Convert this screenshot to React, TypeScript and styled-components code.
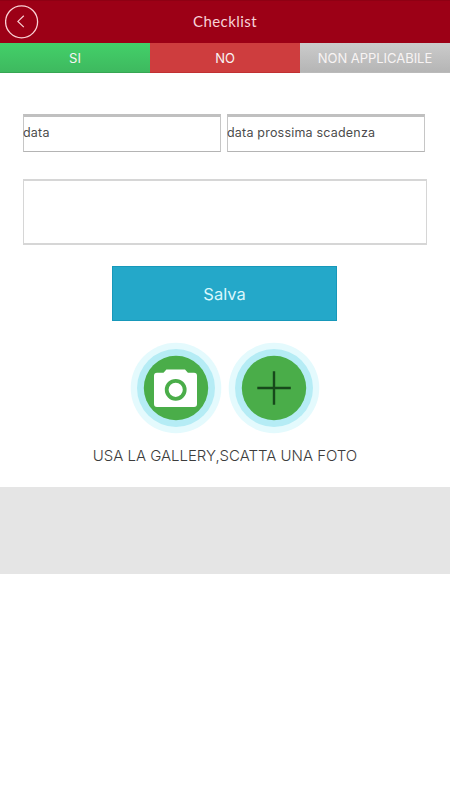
import React from "react";
import styled, { createGlobalStyle } from "styled-components";

const GlobalStyle = createGlobalStyle`
  * { box-sizing: border-box; }
  body { margin: 0; background: #fff; font-family: Inter, "Liberation Sans", sans-serif; }
`;

const Screen = styled.main`
  width: 450px;
  min-height: 800px;
  background: #fff;
`;

const Header = styled.header`
  display: grid;
  grid-template-columns: 44px 1fr 44px;
  align-items: center;
  height: 43px;
  background: #9c0016;
  box-shadow: inset 0 1px 0 #8e0013;
`;

const BackButton = styled.button`
  width: 34px;
  height: 34px;
  margin: 0 0 0 5px;
  padding: 0;
  border: 0;
  background: none;
  svg { display: block; }
`;

const Title = styled.h1`
  margin: 0 0 2px;
  text-align: center;
  font: 400 15px/20px Lato, sans-serif;
  letter-spacing: 0.42px;
  color: #f7d3d8;
`;

const Tabs = styled.nav`
  display: grid;
  grid-template-columns: repeat(3, 1fr);
  height: 30px;
`;

const Tab = styled.button<{ $fill: string; $edge: string; $spacing?: string }>`
  padding: 0;
  border: 0;
  border-bottom: 1px solid ${(p) => p.$edge};
  background: ${(p) => p.$fill};
  color: #f8f4f4;
  font: 400 13px/28px Inter, sans-serif;
  letter-spacing: ${(p) => p.$spacing ?? "0"};
`;

const Form = styled.form`
  display: flex;
  flex-direction: column;
  height: 414px;
  padding: 41px 23px 0;
`;

const DateRow = styled.div`
  display: flex;
  gap: 6px;
`;

const DateField = styled.div`
  width: 198px;
  height: 38px;
  border: 1px solid #c6c6c6;
  border-top: 3px solid #c0c0c0;
  border-bottom-color: #b4b4b4;
  color: #4c4c4c;
  font: 400 12.5px/32px Inter, sans-serif;
  letter-spacing: 0.2px;
  white-space: nowrap;
  span { margin-left: -1px; }
`;

const Notes = styled.textarea`
  display: block;
  width: 404px;
  height: 66px;
  margin: 27px 0 0;
  border: 1px solid #d6d6d6;
  border-width: 2px 1px;
  border-radius: 0;
  background: #fff;
  resize: none;
`;

const SaveButton = styled.button`
  width: 225px;
  height: 55px;
  margin: 21px 0 0 89px;
  padding: 1px 0 0;
  border: 1px solid #1798ba;
  background: #24a8c9;
  color: #d9f7fc;
  font: 400 16.5px/52px Inter, sans-serif;
`;

const Actions = styled.div`
  display: flex;
  gap: 6px;
  margin: 21px 0 0 107px;
`;

const RoundButton = styled.button`
  width: 92px;
  height: 92px;
  padding: 0;
  border: 0;
  background: none;
  svg { display: block; }
`;

const Caption = styled.p`
  margin: 12px 0 0;
  text-align: center;
  color: #3c3c3c;
  font: 300 15px/20px Inter, sans-serif;
  letter-spacing: -0.03px;
  white-space: nowrap;
`;

const Footer = styled.footer`
  height: 87px;
  background: #e5e5e5;
`;

function Halo({ children }: { children: React.ReactNode }) {
  return (
    <svg width="92" height="92" viewBox="0 0 92 92" fill="none">
      <circle cx="46" cy="46" r="45.3" fill="#e4fafd" />
      <circle cx="46" cy="46" r="39" fill="#b5ecf5" />
      <circle cx="46" cy="46" r="32.2" fill="#4aad49" />
      {children}
    </svg>
  );
}

export default function App() {
  return (
    <Screen>
      <GlobalStyle />
      <Header>
        <BackButton aria-label="Indietro">
          <svg width="34" height="34" viewBox="0 0 34 34" fill="none" stroke="#fad0d4">
            <circle cx="16.6" cy="16.8" r="16" strokeWidth="1.3" />
            <path d="M18.8 10.8 12.9 16.4 18.8 22.1" strokeWidth="1.2" />
          </svg>
        </BackButton>
        <Title>Checklist</Title>
      </Header>
      <Tabs>
        <Tab $fill="linear-gradient(#43d069, #3eb95f)" $edge="#37a653">SI</Tab>
        <Tab $fill="#ce3d3e" $edge="#c13032">NO</Tab>
        <Tab $fill="linear-gradient(#cbcbcb, #b5b5b5)" $edge="#bababa" $spacing="-0.04px">NON APPLICABILE</Tab>
      </Tabs>
      <Form>
        <DateRow>
          <DateField><span>data</span></DateField>
          <DateField><span>data prossima scadenza</span></DateField>
        </DateRow>
        <Notes aria-label="Note" />
        <SaveButton type="button">Salva</SaveButton>
        <Actions>
          <RoundButton type="button" aria-label="Scatta una foto">
            <Halo>
              <path
                d="M27 30.8h6.5l2.9-3.4h18.6l2.9 3.4h6.1a3 3 0 0 1 3 3v28.2a3 3 0 0 1-3 3H27a3 3 0 0 1-3-3V33.8a3 3 0 0 1 3-3Z"
                fill="#fff"
              />
              <circle cx="45.7" cy="47.8" r="9" stroke="#4aad49" strokeWidth="3.8" fill="#fff" />
            </Halo>
          </RoundButton>
          <RoundButton type="button" aria-label="Gallery">
            <Halo>
              <path d="M46 29.3v33.5M29.3 46h33.5" stroke="#17491b" strokeWidth="2.4" />
            </Halo>
          </RoundButton>
        </Actions>
        <Caption>USA LA GALLERY,SCATTA UNA FOTO</Caption>
      </Form>
      <Footer />
    </Screen>
  );
}
